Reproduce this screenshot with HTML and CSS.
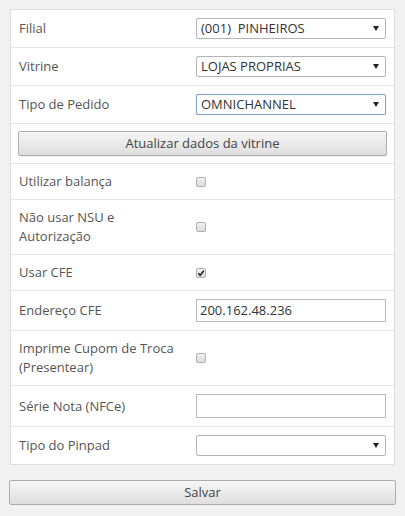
FILE: index.html
```html
<!DOCTYPE html>
<html>
<head>
<meta charset="utf-8">
<link rel="stylesheet" href="styles.css">
</head>
<body>
<div class="panel">
  <div class="row">
    <div class="label">Filial</div>
    <div class="select"><span>(001)&nbsp; PINHEIROS</span><i class="arrow"></i></div>
  </div>
  <div class="row">
    <div class="label">Vitrine</div>
    <div class="select"><span>LOJAS PROPRIAS</span><i class="arrow"></i></div>
  </div>
  <div class="row">
    <div class="label">Tipo de Pedido</div>
    <div class="select focus"><span>OMNICHANNEL</span><i class="arrow"></i></div>
  </div>
  <div class="row full">
    <div class="btn">Atualizar dados da vitrine</div>
  </div>
  <div class="row">
    <div class="label">Utilizar balança</div>
    <div><span class="check"></span></div>
  </div>
  <div class="row">
    <div class="label">Não usar NSU e<br>Autorização</div>
    <div><span class="check"></span></div>
  </div>
  <div class="row">
    <div class="label">Usar CFE</div>
    <div><span class="check on"><svg viewBox="0 0 10 10" width="10" height="10"><path d="M2.3 5.2 L4.2 7.2 L7.8 2.8" fill="none" stroke="#222" stroke-width="1.6"/></svg></span></div>
  </div>
  <div class="row">
    <div class="label">Endereço CFE</div>
    <div class="input">200.162.48.236</div>
  </div>
  <div class="row">
    <div class="label">Imprime Cupom de Troca<br>(Presentear)</div>
    <div><span class="check"></span></div>
  </div>
  <div class="row">
    <div class="label">Série Nota (NFCe)</div>
    <div class="input tall"></div>
  </div>
  <div class="row last">
    <div class="label">Tipo do Pinpad</div>
    <div class="select"><span></span><i class="arrow"></i></div>
  </div>
</div>
<div class="btn save">Salvar</div>
</body>
</html>
```

FILE: styles.css
```css
html, body {
  margin: 0;
  padding: 0;
  background: #f1f1f1;
}
body {
  padding: 9px 9px 0 9px;
  font-family: "Open Sans", "Noto Sans", sans-serif;
  font-size: 13px;
  color: #555;
}
.panel {
  margin: 0 1px 0 1px;
  background: #fff;
  border: 1px solid #dedede;
}
.row {
  display: grid;
  grid-template-columns: 177px 1fr;
  align-items: center;
  padding: 8px 8px;
  line-height: 19px;
  border-bottom: 1px solid #e3e3e3;
}
.row.last { border-bottom: none; }
.row.full {
  display: block;
  padding: 7px 7px 7px 7px;
}
.select {
  height: 21px;
  box-sizing: border-box;
  border: 1px solid #b4b4b4;
  border-radius: 2px;
  display: flex;
  align-items: center;
  justify-content: space-between;
  padding: 0 6px 0 4px;
  color: #333;
  background: #fff;
}
.select.focus {
  border-color: #7ea3d6;
  box-shadow: 0 0 1px #a9c3ea;
}
.arrow {
  width: 0;
  height: 0;
  border-left: 3px solid transparent;
  border-right: 3px solid transparent;
  border-top: 5px solid #222;
}
.input {
  height: 23px;
  box-sizing: border-box;
  border: 1px solid #b9b9b9;
  padding: 0 3px;
  line-height: 21px;
  color: #333;
  background: #fff;
}
.input.tall { height: 24px; }
.check {
  display: inline-block;
  vertical-align: middle;
  width: 10px;
  height: 10px;
  box-sizing: border-box;
  border: 1px solid #b0b0b0;
  border-radius: 2px;
  background: linear-gradient(#f0f0f0, #dcdcdc);
  position: relative;
  top: -1px;
}
.check svg {
  position: absolute;
  left: -1px;
  top: -1px;
}
.btn {
  height: 25px;
  box-sizing: border-box;
  border: 1px solid #adadad;
  border-radius: 2px;
  background: linear-gradient(#f6f6f6, #dedede);
  text-align: center;
  line-height: 23px;
  color: #444;
  font-size: 13px;
  box-shadow: 0 1px 0 #eee;
}
.btn.save {
  margin-top: 15px;
}
```
